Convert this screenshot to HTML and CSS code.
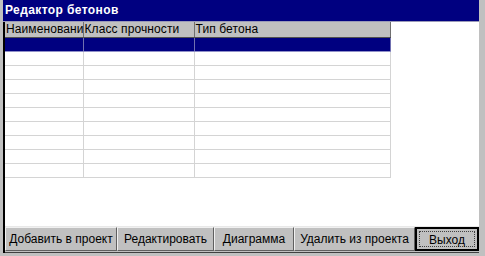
FILE: index.html
```html
<html lang="ru">
<head>
  <meta charset="utf-8">
  <title>Редактор бетонов</title>
  <link rel="stylesheet" href="styles.css">
</head>
<body>
<div class="window">
  <div class="titlebar">Редактор бетонов</div>
  <div class="client">
    <div class="grid-area">
      <table class="grid">
        <colgroup>
          <col class="c1"><col class="c2"><col class="c3">
        </colgroup>
        <thead>
          <tr><th>Наименовани</th><th>Класс прочности</th><th>Тип бетона</th></tr>
        </thead>
        <tbody>
          <tr class="selected"><td></td><td></td><td></td></tr>
          <tr><td></td><td></td><td></td></tr>
          <tr><td></td><td></td><td></td></tr>
          <tr><td></td><td></td><td></td></tr>
          <tr><td></td><td></td><td></td></tr>
          <tr><td></td><td></td><td></td></tr>
          <tr><td></td><td></td><td></td></tr>
          <tr><td></td><td></td><td></td></tr>
          <tr><td></td><td></td><td></td></tr>
          <tr><td></td><td></td><td></td></tr>
        </tbody>
      </table>
    </div>
    <div class="buttons">
      <button class="btn b1">Добавить в проект</button>
      <button class="btn b2">Редактировать</button>
      <button class="btn b3">Диаграмма</button>
      <button class="btn b4">Удалить из проекта</button>
      <button class="btn b5 default"><span class="focus">Выход</span></button>
    </div>
  </div>
</div>
</body>
</html>
```

FILE: styles.css
```css
html, body {
    margin: 0;
    padding: 0;
}

body {
    width: 485px;
    height: 256px;
    background: #c0c0c0;
    font-family: "Liberation Sans", Arial, sans-serif;
    overflow: hidden;
}

.window {
    margin-left: 3px;
    width: 476px;
    height: 253px;
    display: flex;
    flex-direction: column;
}

.titlebar {
    height: 22px;
    line-height: 21px;
    background: #000080;
    color: #fff;
    font-weight: bold;
    font-size: 12px;
    letter-spacing: 0.4px;
    padding-left: 2px;
    box-sizing: border-box;
    border-bottom: 1px solid #9a9ab8;
}

.client {
    flex: 1;
    display: flex;
    flex-direction: column;
    background: #fff;
    border-left: 2px solid #000;
}

.grid-area {
    flex: 1;
    background: #fff;
}

.grid {
    border-collapse: collapse;
    table-layout: fixed;
    width: 385px;
    font-size: 12px;
}

.c1 { width: 78px; }
.c2 { width: 111px; }
.c3 { width: 196px; }

.grid th {
    height: 14px;
    padding: 0 0 0 1px;
    background: #c0c0c0;
    color: #000;
    font-weight: normal;
    text-align: left;
    white-space: nowrap;
    line-height: 15px;
    letter-spacing: 0.1px;
    border-right: 1px solid #707070;
    border-bottom: 1px solid #505050;
    box-sizing: border-box;
}

.grid td {
    height: 14px;
    padding: 0;
    border-right: 1px solid #d4d4d4;
    border-bottom: 1px solid #d4d4d4;
    box-sizing: border-box;
}

.grid tr.selected td {
    background: #000080;
    border-right-color: #7070b0;
    border-bottom-color: #9090c8;
}

.buttons {
    height: 25px;
    display: flex;
    background: #c0c0c0;
    border-top: 1px solid #e8e8e8;
    border-bottom: 1px solid #404040;
}

.btn {
    height: 24px;
    margin: 0;
    padding: 0;
    font-family: "Liberation Sans", Arial, sans-serif;
    font-size: 12px;
    color: #000;
    background: #c0c0c0;
    border-top: 1px solid #f0f0f0;
    border-left: 1px solid #f0f0f0;
    border-right: 1px solid #606060;
    border-bottom: 1px solid #606060;
    box-sizing: border-box;
    white-space: nowrap;
}

.b1 { width: 112px; }
.b2 { width: 97px; }
.b3 { width: 80px; }
.b4 { width: 121px; }
.b5 { width: 64px; }

.btn.default {
    border: 2px solid #000;
    padding: 2px;
}

.focus {
    display: block;
    height: 100%;
    line-height: 16px;
    border: 1px dotted #404040;
    box-sizing: border-box;
}
```
